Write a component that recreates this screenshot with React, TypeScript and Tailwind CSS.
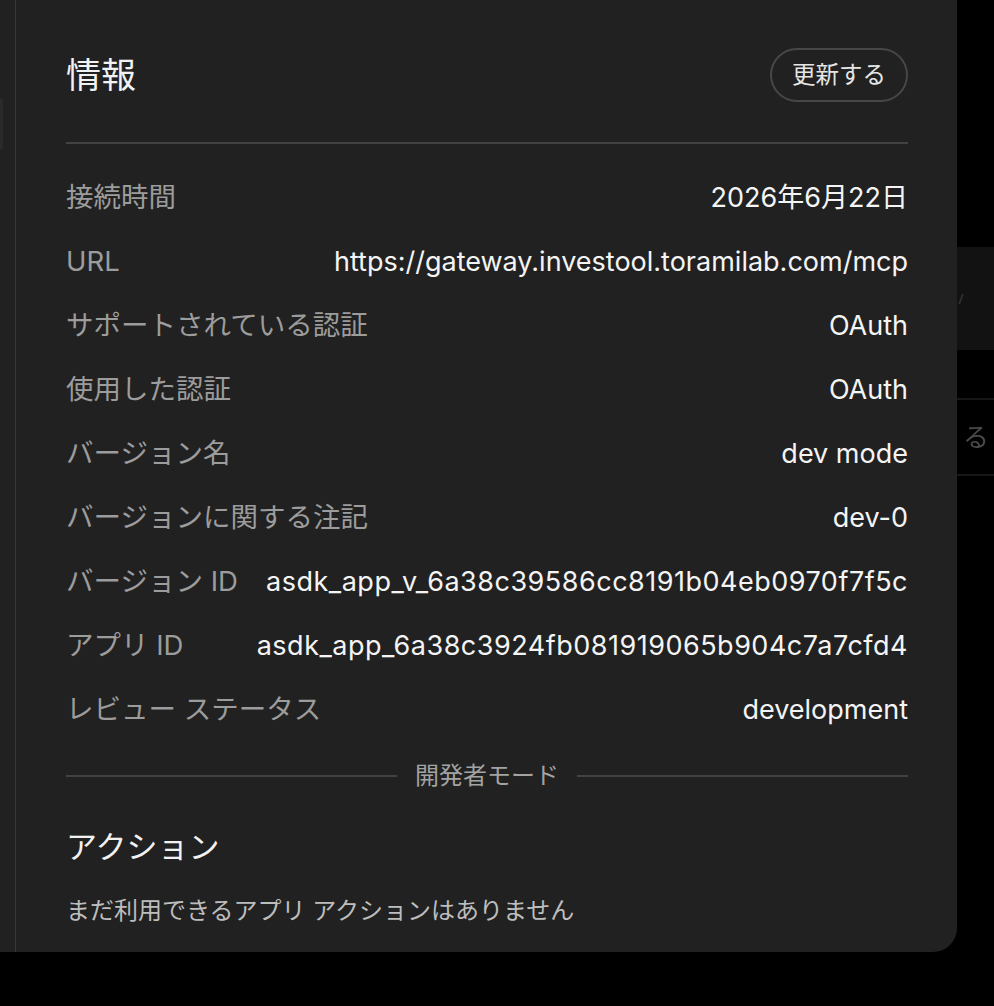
const rows: [string, string, boolean?][] = [
  ["接続時間", "2026年6月22日"],
  ["URL", "https://gateway.investool.toramilab.com/mcp"],
  ["サポートされている認証", "OAuth"],
  ["使用した認証", "OAuth"],
  ["バージョン名", "dev mode"],
  ["バージョンに関する注記", "dev-0"],
  ["バージョン ID", "asdk_app_v_6a38c39586cc8191b04eb0970f7f5c", true],
  ["アプリ ID", "asdk_app_6a38c3924fb081919065b904c7a7cfd4", true],
  ["レビュー ステータス", "development"],
]

export default function App() {
  return (
    <div
      className="w-[994px] h-[1006px] bg-black overflow-hidden flex items-start"
      style={{ fontFamily: 'Inter, "Noto Sans CJK JP", sans-serif' }}
    >
      {/* sidebar behind the panel */}
      <div className="w-[16px] h-[952px] shrink-0 bg-[#212121] border-r border-[#383838] pt-[98px]">
        <div className="w-[3px] h-[52px] bg-[#2a2a2a] rounded-r-[6px]" />
      </div>

      {/* info panel */}
      <div className="w-[941px] h-[952px] shrink-0 bg-[#212121] rounded-br-[24px] pl-[50px] pr-[49px] pt-[48px]">
        <div className="flex items-center justify-between h-[54px]">
          <h2 className="text-[35px] leading-none text-[#f2f2f2]">情報</h2>
          <button className="h-[54px] w-[138px] rounded-full border-2 border-[#474747] text-[23.5px] text-[#e6e6e6] flex items-center justify-center">
            更新する
          </button>
        </div>
        <div className="mt-[40px] h-[2px] bg-[#424242]" />

        <div className="mt-[22px]">
          {rows.map(([label, value, id]) => (
            <div key={label} className="h-[64px] flex items-center justify-between gap-6">
              <span className="text-[27.5px] text-[#9c9c9c] whitespace-nowrap">{label}</span>
              <span
                className={
                  id
                    ? "text-[27px] text-[#f4f4f4] whitespace-nowrap tracking-[0.5px]"
                    : "text-[27px] text-[#f4f4f4] whitespace-nowrap"
                }
              >
                {value}
              </span>
            </div>
          ))}
        </div>

        <div className="mt-[19px] h-[30px] flex items-center gap-[18px]">
          <div className="flex-1 h-[2px] bg-[#424242]" />
          <span className="text-[24px] text-[#a3a3a3] whitespace-nowrap">開発者モード</span>
          <div className="flex-1 h-[2px] bg-[#424242]" />
        </div>

        <h3 className="mt-[36px] text-[31px] leading-[40px] text-[#f2f2f2]">アクション</h3>
        <p className="mt-[28px] text-[24px] leading-[32px] text-[#bdbdbd]">まだ利用できるアプリ アクションはありません</p>
      </div>

      {/* page behind, to the right */}
      <div className="flex-1 min-w-0 overflow-hidden">
        <div className="mt-[247px] h-[103px] bg-[#121212] flex items-center">
          <div className="ml-[1px] w-[4px] h-[10px] border-r-2 border-[#2e2e2e] skew-x-[-20deg]" />
        </div>
        <div className="mt-[48px] h-[2px] bg-[#161616]" />
        <div className="h-[74px] flex items-center pl-[6px]">
          <span className="text-[26px] text-[#4a4a4a] whitespace-nowrap blur-[0.6px]">る</span>
        </div>
        <div className="h-[2px] bg-[#161616]" />
      </div>
    </div>
  )
}
